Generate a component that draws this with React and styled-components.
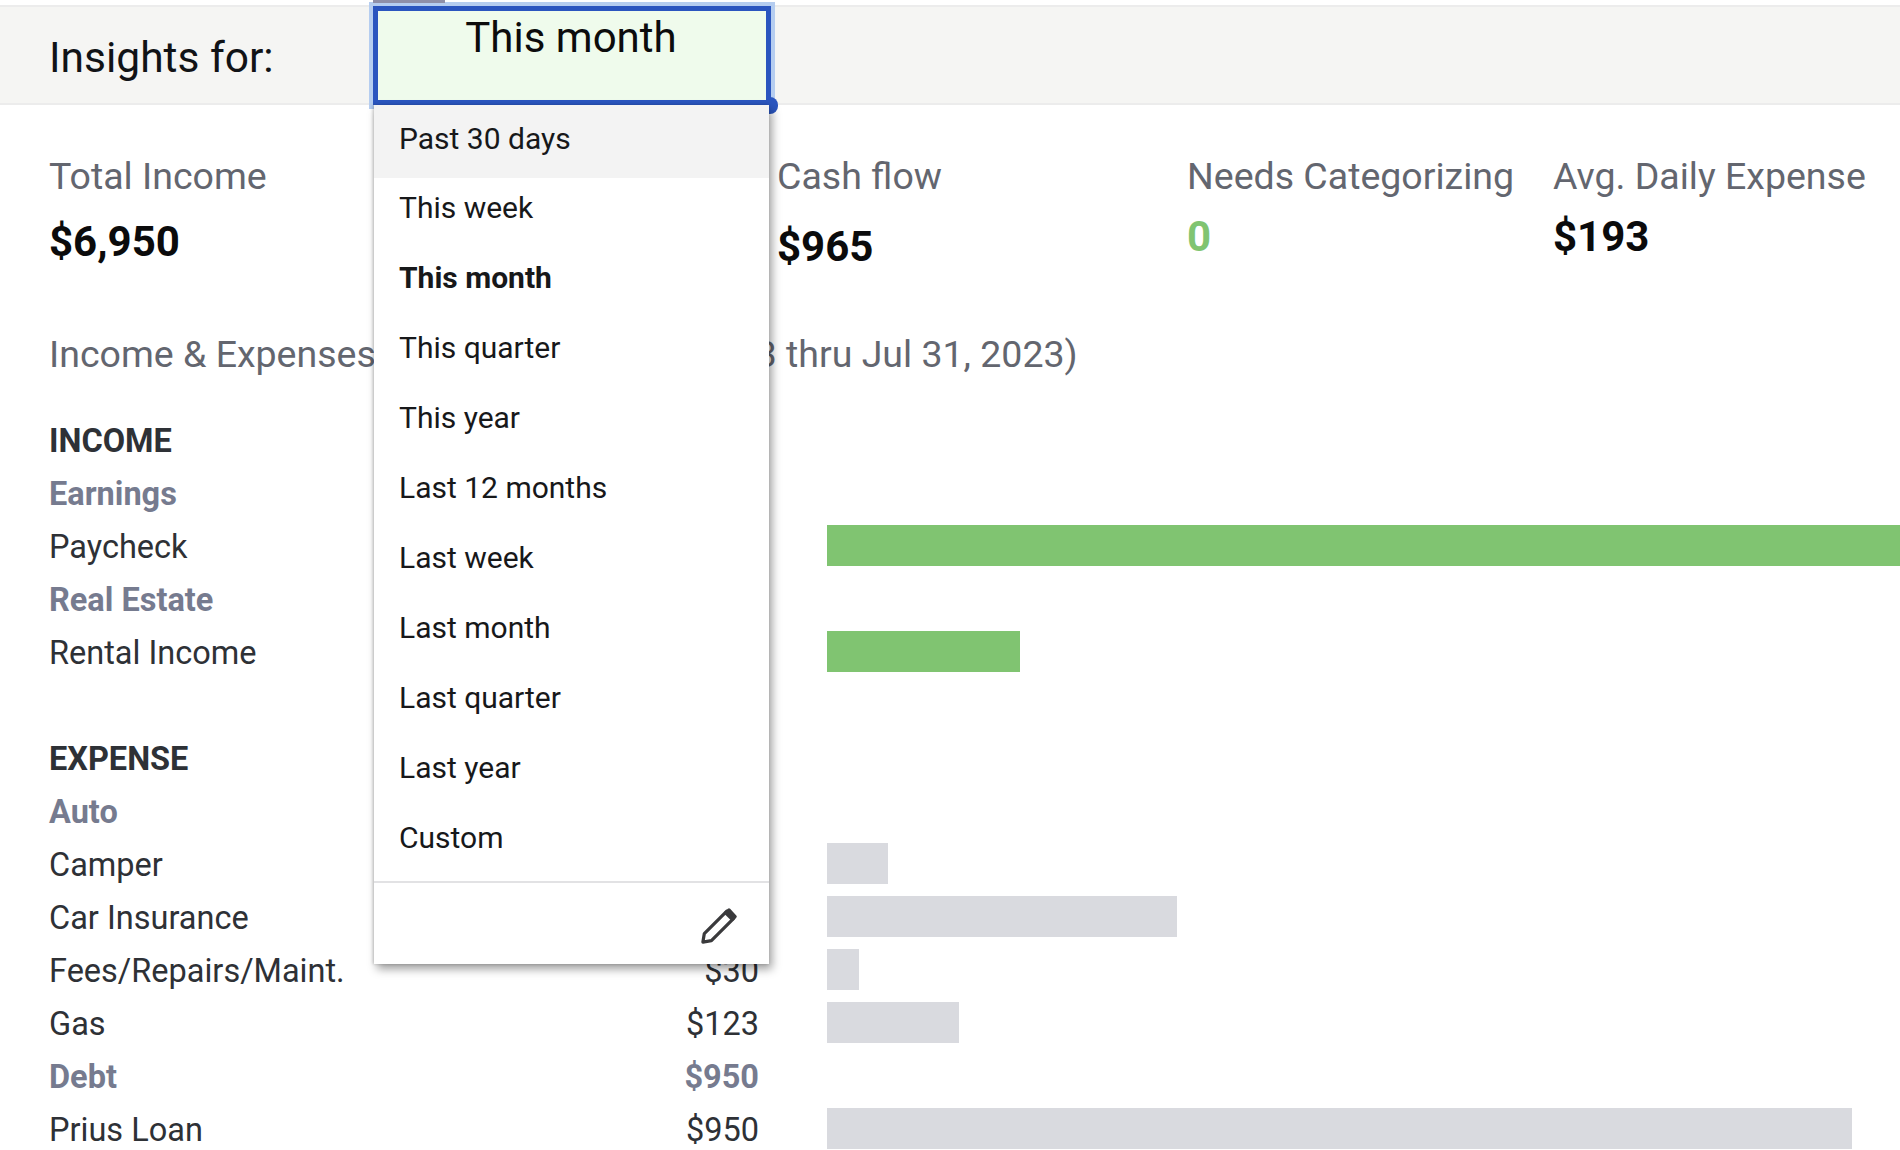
import React from 'react';
import styled, { createGlobalStyle } from 'styled-components';

const GlobalStyle = createGlobalStyle`
  html, body {
    margin: 0;
    height: 100%;
    background: #ffffff;
    font-family: Roboto, "Liberation Sans", sans-serif;
  }
`;

const Page = styled.div`
  width: 1900px;
  height: 1150px;
  overflow: hidden;
  padding-top: 5px;
  box-sizing: border-box;
`;

const TopBar = styled.div`
  height: 100px;
  box-sizing: border-box;
  display: flex;
  align-items: center;
  background: #f5f5f3;
  border-top: 2px solid #ececec;
  border-bottom: 2px solid #ececec;
  padding-left: 49px;
`;

const BarLabel = styled.div`
  width: 324px;
  padding-top: 5px;
  font-size: 42.5px;
  color: #111316;
`;

const SelectWrap = styled.div`
  position: relative;
  align-self: flex-start;
  margin-top: -1px;
`;

const SelectBox = styled.div`
  width: 398px;
  height: 99px;
  box-sizing: border-box;
  border: 5px solid #2a55bf;
  background: #effbec;
  box-shadow: 0 0 0 4px #b5cdf0;
  text-align: center;
  padding-right: 2px;
  font-size: 42px;
  line-height: 54px;
  color: #0c0c0c;
`;

const Tab = styled.div`
  position: absolute;
  left: 0;
  top: -6px;
  width: 72px;
  height: 3px;
  background: #8f8fa8;
`;

const Handle = styled.div`
  position: absolute;
  right: -7px;
  top: 91px;
  width: 9px;
  height: 17px;
  background: #2a55bf;
  border-radius: 0 8px 8px 0;
`;

const Menu = styled.div`
  position: absolute;
  z-index: 5;
  left: 1px;
  top: 99px;
  width: 395px;
  background: #ffffff;
  box-shadow: 3px 5px 9px rgba(0, 0, 0, 0.38), -1px 0 3px rgba(0, 0, 0, 0.2);
`;

const MenuItem = styled.div`
  height: 70px;
  box-sizing: border-box;
  display: flex;
  align-items: center;
  padding: 0 0 12px 25px;
  font-size: 30px;
  font-weight: ${p => (p.$selected ? 700 : 400)};
  color: #17181a;
  background: ${p => (p.$active ? '#f3f3f3' : 'transparent')};
  &:first-child {
    height: 73px;
    padding-bottom: 7px;
  }
`;

const MenuFooter = styled.div`
  height: 83px;
  box-sizing: border-box;
  margin-top: 3px;
  border-top: 2px solid #e2e2e4;
  display: flex;
  align-items: center;
  justify-content: flex-end;
  padding: 4px 32px 0 0;
  color: #3a3a3c;
`;

const Stats = styled.div`
  display: grid;
  grid-template-columns: 728px 410px 366px 1fr;
  padding: 49px 0 0 49px;
  height: 125px;
`;

const Stat = styled.div``;

const StatLabel = styled.div`
  font-size: 37.5px;
  line-height: 44px;
  color: #63666f;
`;

const StatValue = styled.div`
  font-size: 42px;
  line-height: 48px;
  font-weight: 700;
  margin-top: ${p => p.$offset}px;
  color: ${p => p.$color || '#0b0b0c'};
`;

const Heading = styled.div`
  padding-left: 49px;
  font-size: 37.5px;
  line-height: 44px;
  margin-top: 53px;
  color: #63666f;
  white-space: nowrap;
`;

const Table = styled.div`
  margin-top: 38px;
  padding-left: 49px;
  display: grid;
  grid-template-columns: 710px 1fr;
  grid-auto-rows: 53px;
  column-gap: 68px;
`;

const Cell = styled.div`
  display: flex;
  align-items: center;
  justify-content: space-between;
  font-size: 32.5px;
  font-weight: ${p => (p.$kind === 'item' ? 400 : 700)};
  color: ${p => (p.$kind === 'group' ? '#767b8f' : '#2e3136')};
  white-space: nowrap;
`;

const BarTrack = styled.div`
  display: flex;
  align-items: center;
  padding-bottom: 2px;
`;

const Bar = styled.div`
  height: 41px;
  flex: none;
  background: ${p => (p.$income ? '#80c471' : '#d9dadf')};
`;

const ranges = [
  'Past 30 days',
  'This week',
  'This month',
  'This quarter',
  'This year',
  'Last 12 months',
  'Last week',
  'Last month',
  'Last quarter',
  'Last year',
  'Custom',
];

const rows = [
  { kind: 'section', label: 'INCOME' },
  { kind: 'group', label: 'Earnings', amount: '$6,000' },
  { kind: 'item', label: 'Paycheck', amount: '$6,000', bar: 1073, income: true },
  { kind: 'group', label: 'Real Estate', amount: '$950' },
  { kind: 'item', label: 'Rental Income', amount: '$950', bar: 193, income: true },
  { kind: 'spacer' },
  { kind: 'section', label: 'EXPENSE' },
  { kind: 'group', label: 'Auto', amount: '$533' },
  { kind: 'item', label: 'Camper', amount: '$57', bar: 61 },
  { kind: 'item', label: 'Car Insurance', amount: '$323', bar: 350 },
  { kind: 'item', label: 'Fees/Repairs/Maint.', amount: '$30', bar: 32 },
  { kind: 'item', label: 'Gas', amount: '$123', bar: 132 },
  { kind: 'group', label: 'Debt', amount: '$950' },
  { kind: 'item', label: 'Prius Loan', amount: '$950', bar: 1025 },
];

function PencilIcon() {
  return (
    <svg width="36" height="36" viewBox="0 0 38 38" fill="none" stroke="currentColor" strokeWidth="3.4" strokeLinejoin="round">
      <path d="M2 36 L3.5 27 L27 3.5 L34.5 11 L11 34.5 Z" />
      <path d="M26 5 L33 12 L36 9 L29.500 2 Z" fill="currentColor" />
    </svg>
  );
}

export default function App() {
  return (
    <Page>
      <GlobalStyle />
      <TopBar>
        <BarLabel>Insights for:</BarLabel>
        <SelectWrap>
          <Tab />
          <SelectBox>This month</SelectBox>
          <Handle />
          <Menu>
            {ranges.map((range, i) => (
              <MenuItem key={range} $active={i === 0} $selected={range === 'This month'}>
                {range}
              </MenuItem>
            ))}
            <MenuFooter>
              <PencilIcon />
            </MenuFooter>
          </Menu>
        </SelectWrap>
      </TopBar>

      <Stats>
        <Stat>
          <StatLabel>Total Income</StatLabel>
          <StatValue $offset={20}>$6,950</StatValue>
        </Stat>
        <Stat>
          <StatLabel>Cash flow</StatLabel>
          <StatValue $offset={25}>$965</StatValue>
        </Stat>
        <Stat>
          <StatLabel>Needs Categorizing</StatLabel>
          <StatValue $offset={15} $color="#80c471">0</StatValue>
        </Stat>
        <Stat>
          <StatLabel>Avg. Daily Expense</StatLabel>
          <StatValue $offset={15}>$193</StatValue>
        </Stat>
      </Stats>

      <Heading>Income &amp; Expenses this month: (Jul 1, 2023 thru Jul 31, 2023)</Heading>

      <Table>
        {rows.map((row, i) => (
          row.kind === 'spacer' ? (
            <React.Fragment key={i}>
              <div />
              <div />
            </React.Fragment>
          ) : (
            <React.Fragment key={i}>
              <Cell $kind={row.kind}>
                <span>{row.label}</span>
                <span>{row.amount}</span>
              </Cell>
              <BarTrack>
                {row.bar && <Bar $income={row.income} style={{ width: row.bar }} />}
              </BarTrack>
            </React.Fragment>
          )
        ))}
      </Table>
    </Page>
  );
}
